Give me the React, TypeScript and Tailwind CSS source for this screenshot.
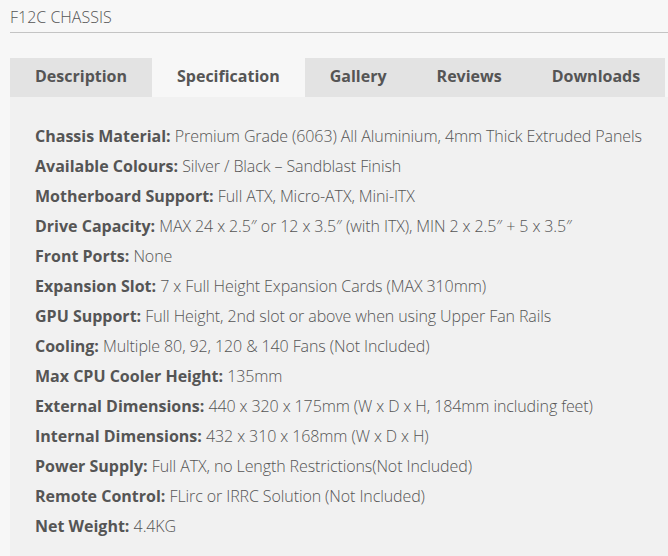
import React from "react";

const specs: [string, string][] = [
  ["Chassis Material:", "Premium Grade (6063) All Aluminium, 4mm Thick Extruded Panels"],
  ["Available Colours:", "Silver / Black – Sandblast Finish"],
  ["Motherboard Support:", "Full ATX, Micro-ATX, Mini-ITX"],
  ["Drive Capacity:", "MAX 24 x 2.5″ or 12 x 3.5″ (with ITX), MIN 2 x 2.5″ + 5 x 3.5″"],
  ["Front Ports:", "None"],
  ["Expansion Slot:", "7 x Full Height Expansion Cards (MAX 310mm)"],
  ["GPU Support:", "Full Height, 2nd slot or above when using Upper Fan Rails"],
  ["Cooling:", "Multiple 80, 92, 120 & 140 Fans (Not Included)"],
  ["Max CPU Cooler Height:", "135mm"],
  ["External Dimensions:", "440 x 320 x 175mm (W x D x H, 184mm including feet)"],
  ["Internal Dimensions:", "432 x 310 x 168mm (W x D x H)"],
  ["Power Supply:", "Full ATX, no Length Restrictions(Not Included)"],
  ["Remote Control:", "FLirc or IRRC Solution (Not Included)"],
  ["Net Weight:", "4.4KG"],
];

const tabs = ["Description", "Specification", "Gallery", "Reviews", "Downloads"];

export default function App() {
  return (
    <div
      className="w-[668px] h-[556px] overflow-hidden bg-[#f7f7f7] pl-[10px]"
      style={{ fontFamily: '"Open Sans", "Noto Sans", sans-serif' }}
    >
      <div className="h-[33px] border-b border-[#c4c4c4] text-[16px] font-light leading-[34px] text-[#555]">
        F12C CHASSIS
      </div>
      <div className="mt-[25px] flex h-[39px]">
        {tabs.map((t) => (
          <div
            key={t}
            className={
              "px-[25px] pb-[3px] flex items-center text-[16px] font-bold text-[#555] " +
              (t === "Specification" ? "bg-[#f7f7f7]" : "bg-[#e3e3e3]")
            }
          >
            {t}
          </div>
        ))}
      </div>
      <div className="bg-[#f1f1f1] pl-[25px] pt-[24px] pb-[20px] h-[500px]">
        {specs.map(([k, v]) => (
          <div key={k} className="h-[30px] leading-[30px] text-[16px] font-light text-[#555] whitespace-nowrap">
            <span className="font-bold">{k}</span> <span className="tracking-[-0.1px]">{v}</span>
          </div>
        ))}
      </div>
    </div>
  );
}
